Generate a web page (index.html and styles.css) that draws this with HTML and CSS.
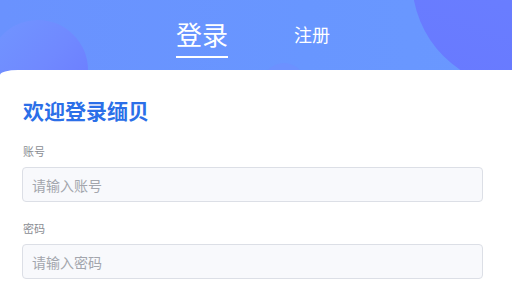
FILE: index.html
```html
<!DOCTYPE html>
<html lang="zh-CN">
<head>
<meta charset="utf-8">
<title>登录</title>
<link rel="stylesheet" href="styles.css">
</head>
<body>
<div class="page">
  <header class="header">
    <span class="blob blob-left"></span>
    <span class="blob blob-mid"></span>
    <span class="blob blob-right"></span>
    <nav class="tabs">
      <span class="tab tab-active">登录</span>
      <span class="tab tab-small">注册</span>
    </nav>
  </header>
  <main class="card">
    <h1 class="title">欢迎登录缅贝</h1>
    <div class="field">
      <label class="label">账号</label>
      <input class="input" type="text" placeholder="请输入账号">
    </div>
    <div class="field">
      <label class="label">密码</label>
      <input class="input" type="password" placeholder="请输入密码">
    </div>
  </main>
</div>
</body>
</html>
```

FILE: styles.css
```css
* { box-sizing: border-box; }
html, body { margin: 0; padding: 0; }
body {
  font-family: "Noto Sans CJK SC", "Noto Sans", sans-serif;
  background: #ffffff;
}
.page {
  width: 512px;
  height: 292px;
  overflow: hidden;
  background: #ffffff;
  display: flex;
  flex-direction: column;
}
.header {
  position: relative;
  height: 76px;
  flex: none;
  overflow: hidden;
  background: linear-gradient(90deg, #6a92fe 0%, #6896ff 60%, #6a98ff 100%);
}
.blob {
  position: absolute;
  border-radius: 50%;
}
.blob-left {
  left: -12px;
  top: 20px;
  width: 100px;
  height: 100px;
  background: linear-gradient(135deg, #7196ff 0%, #7089ff 50%, #6a78ff 100%);
}
.blob-mid {
  left: 262px;
  top: 63px;
  width: 44px;
  height: 44px;
  background: #6d91ff;
}
.blob-right {
  left: 412px;
  top: -128px;
  width: 216px;
  height: 216px;
  background: linear-gradient(200deg, #6c8cff 0%, #697dff 60%, #6879ff 100%);
}
.tabs {
  position: relative;
  display: flex;
  justify-content: center;
  align-items: flex-start;
  gap: 66px;
  padding-top: 20px;
  padding-right: 6px;
}
.tab {
  color: #ffffff;
  line-height: 28px;
}
.tab-active {
  font-size: 26px;
  padding-bottom: 8px;
  border-bottom: 2px solid #ffffff;
}
.tab-small {
  font-size: 18px;
}
.card {
  position: relative;
  flex: 1;
  margin-top: -6px;
  background: #ffffff;
  border-top-left-radius: 18px 5px;
  padding: 26px 29px 0 22px;
}
.title {
  margin: 0;
  font-size: 21px;
  line-height: 28px;
  font-weight: 700;
  color: #2b6fe8;
  padding-left: 1px;
}
.field {
  display: flex;
  flex-direction: column;
  margin-top: 19px;
}
.field + .field {
  margin-top: 18px;
}
.label {
  font-size: 11px;
  line-height: 16px;
  color: #8a8d93;
  margin-bottom: 8px;
  padding-left: 1px;
}
.input {
  width: 100%;
  height: 35px;
  border: 1px solid #dcdfe6;
  border-radius: 4px;
  background: #f8f9fc;
  padding: 0 9px;
  font-family: "Noto Sans CJK SC", "Noto Sans", sans-serif;
  font-size: 14px;
  color: #333;
  outline: none;
}
.input::placeholder {
  color: #a3a6ad;
}
```
